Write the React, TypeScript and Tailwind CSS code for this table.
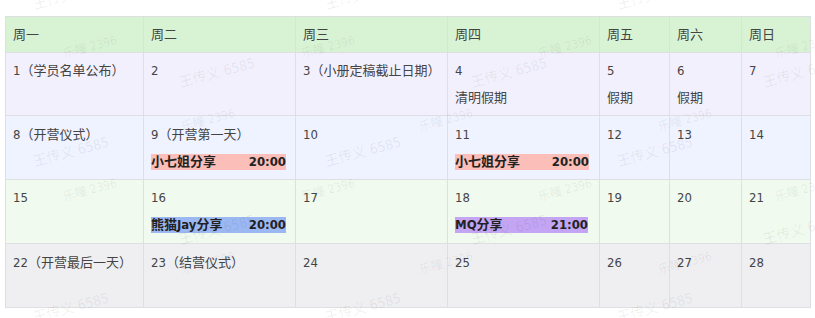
import React from 'react'

type Ev = { name: string; time: string; color: string; width: string }
type Cell = { d: string; note?: string; ev?: Ev }

const WEEK = ['周一', '周二', '周三', '周四', '周五', '周六', '周日']

const share = (name: string, time: string, color: string, width = 'w-[135px]'): Ev => ({ name, time, color, width })

const ROWS: { bg: string; h: string; pt: string; cells: Cell[] }[] = [
  {
    bg: 'bg-[#f3f0fe]',
    h: 'h-[63px]',
    pt: 'pt-[8px]',
    cells: [
      { d: '1（学员名单公布）' },
      { d: '2' },
      { d: '3（小册定稿截止日期）' },
      { d: '4', note: '清明假期' },
      { d: '5', note: '假期' },
      { d: '6', note: '假期' },
      { d: '7' },
    ],
  },
  {
    bg: 'bg-[#eff2ff]',
    h: 'h-[64px]',
    pt: 'pt-[9px]',
    cells: [
      { d: '8（开营仪式）' },
      { d: '9（开营第一天）', ev: share('小七姐分享', '20:00', 'bg-[#fbbeb8]') },
      { d: '10' },
      { d: '11', ev: share('小七姐分享', '20:00', 'bg-[#fbbeb8]', 'w-[134px]') },
      { d: '12' },
      { d: '13' },
      { d: '14' },
    ],
  },
  {
    bg: 'bg-[#f0faee]',
    h: 'h-[64px]',
    pt: 'pt-[8px]',
    cells: [
      { d: '15' },
      { d: '16', ev: share('熊猫Jay分享', '20:00', 'bg-[#9cb8f3]') },
      { d: '17' },
      { d: '18', ev: share('MQ分享', '21:00', 'bg-[#c3a5f4]', 'w-[133px]') },
      { d: '19' },
      { d: '20' },
      { d: '21' },
    ],
  },
  {
    bg: 'bg-[#efeff2]',
    h: 'h-[64px]',
    pt: 'pt-[9px]',
    cells: [
      { d: '22（开营最后一天）' },
      { d: '23（结营仪式）' },
      { d: '24' },
      { d: '25' },
      { d: '26' },
      { d: '27' },
      { d: '28' },
    ],
  },
]

// watermark lattice (centres, px)
const MARKS: { t: string; x: number; y: number; big: boolean }[] = []
;[-5, 73, 152, 230, 308].forEach((y, i) => {
  const xs = i % 2 === 0 ? [71, 363, 655] : [217, 509, 801]
  xs.forEach((x) => MARKS.push({ t: '王传义 6585', x, y, big: true }))
})
;[47, 120, 190, 263].forEach((y, i) => {
  const xs = i % 2 === 0 ? [90, 328, 565, 802] : [208, 446, 685]
  xs.forEach((x) => MARKS.push({ t: '乐瞳 2396', x, y, big: false }))
})

const FONT = "font-['DejaVu_Sans_Condensed','DejaVu_Sans','Noto_Sans_CJK_SC',sans-serif]"

export default function App() {
  return (
    <div className={`relative w-[815px] h-[318px] overflow-hidden bg-white pl-[5px] pt-[16px] ${FONT} text-[13px] text-[#444]`}>
      <div className="w-[806px] grid grid-cols-[138px_152px_152px_152px_70px_72px_69px] border-l border-t border-[#dedfe3]">
        {/* header */}
        {WEEK.map((w) => (
          <div key={w} className="h-[36px] flex items-center pl-[7px] bg-[#d8f3d4] border-r border-b border-[#dedfe3]">
            {w}
          </div>
        ))}

        {/* weeks */}
        {ROWS.map((row) =>
          row.cells.map((c) => (
            <div key={c.d} className={`${row.h} ${row.bg} ${row.pt} pl-[7px] border-r border-b border-[#dedfe3]`}>
              <div className="leading-[20px] whitespace-nowrap">{c.d}</div>
              {c.note && <div className="mt-[7px] leading-[20px]">{c.note}</div>}
              {c.ev && (
                <div className={`mt-[9px] h-[16px] ${c.ev.width} ${c.ev.color} flex justify-between items-center leading-[16px] font-bold text-[#222]`}>
                  <span>{c.ev.name}</span>
                  <span>{c.ev.time}</span>
                </div>
              )}
            </div>
          ))
        )}
      </div>

      {/* watermark overlay */}
      <div className="absolute inset-0 pointer-events-none">
        {MARKS.map((m, i) => (
          <span
            key={i}
            className={`absolute -translate-x-1/2 -translate-y-1/2 rotate-[-15deg] whitespace-nowrap text-black/[0.07] ${m.big ? 'text-[14px]' : 'text-[12px]'}`}
            style={{ left: m.x, top: m.y }}
          >
            {m.t}
          </span>
        ))}
      </div>
    </div>
  )
}
